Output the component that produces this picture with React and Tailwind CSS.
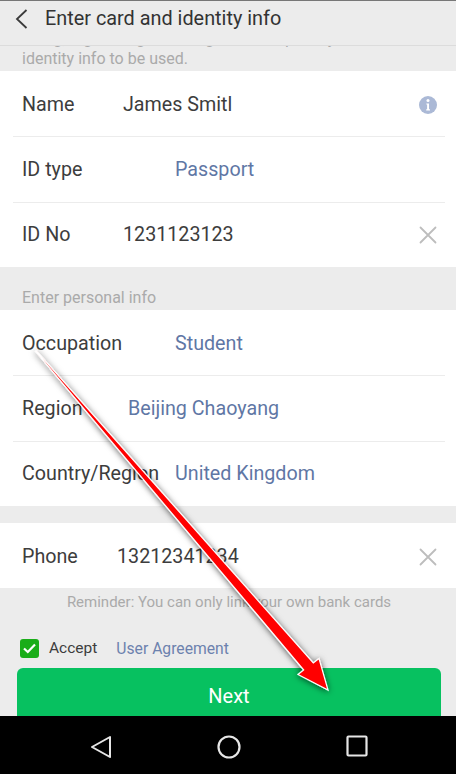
import React from "react";

const labelCls = "text-[19.7px] leading-[26px] text-[#3d3d3d] shrink-0 whitespace-nowrap";
const blueCls = "text-[19.7px] leading-[26px] text-[#5f77a5] whitespace-nowrap";
const darkCls = "text-[19.7px] leading-[26px] text-[#3d3d3d] whitespace-nowrap";

function Row({ label, labelW, value, blue, divider, right }) {
  return (
    <div className="relative h-[65.33px] flex items-center pl-[22px] pr-[18px] pt-[2px]">
      <div className={`${labelCls} ${labelW}`}>{label}</div>
      <div className={blue ? blueCls : darkCls}>{value}</div>
      <div className="ml-auto flex items-center">{right}</div>
      {divider && <div className="absolute left-[13px] right-[11px] bottom-[-1px] h-px bg-[#ececec]" />}
    </div>
  );
}

function ClearIcon() {
  return (
    <svg width="20" height="20" viewBox="0 0 20 20" fill="none" stroke="#bdbdbd" strokeWidth="1.8" strokeLinecap="round">
      <path d="M2.5 2.5 L17.5 17.5 M17.5 2.5 L2.5 17.5" />
    </svg>
  );
}

function InfoIcon() {
  return (
    <svg width="20" height="20" viewBox="0 0 20 20">
      <circle cx="10" cy="10" r="9" fill="#abb9d6" />
      <circle cx="10" cy="5.6" r="1.5" fill="#fff" />
      <path d="M8.3 8.4 H11 V14.2 H12 V15.4 H8.2 V14.2 H9.1 V9.6 H8.3 Z" fill="#fff" />
    </svg>
  );
}

export default function App() {
  return (
    <div className="relative w-[456px] h-[774px] overflow-hidden bg-[#ececec] flex flex-col font-['Roboto',sans-serif]">
      <div className="h-px bg-[#777777] shrink-0" />
      <header className="h-[45px] shrink-0 flex items-center pl-[15px] pb-[8px] border-b border-[#dcdcdc] bg-[#ececec]">
        <svg width="14" height="20" viewBox="0 0 14 20" fill="none" stroke="#3a3a3a" strokeWidth="1.8" className="mr-[16px]">
          <path d="M11.5 1 L2 10 L11.5 19" />
        </svg>
        <div className="text-[19.85px] leading-[26px] text-[#333333] whitespace-nowrap">Enter card and identity info</div>
      </header>

      <div className="h-[25px] shrink-0 overflow-hidden flex flex-col justify-end pl-[22px] pb-[2px]">
        <div className="text-[16px] leading-[20px] text-[#aaaaaa] whitespace-nowrap">Using, registering or linking a card requires your</div>
        <div className="text-[16px] leading-[20px] text-[#aaaaaa] whitespace-nowrap">identity info to be used.</div>
      </div>

      <section className="bg-white shrink-0">
        <Row label="Name" labelW="w-[101px]" value="James Smitl" divider right={<InfoIcon />} />
        <Row label="ID type" labelW="w-[153px]" value="Passport" blue divider />
        <Row label="ID No" labelW="w-[101px]" value="1231123123" right={<ClearIcon />} />
      </section>

      <div className="h-[43px] shrink-0 flex items-end pl-[22px] pb-[2px] text-[16px] leading-[20px] text-[#aaaaaa]">Enter personal info</div>

      <section className="bg-white shrink-0">
        <Row label="Occupation" labelW="w-[153px]" value="Student" blue divider />
        <Row label="Region" labelW="w-[106px]" value="Beijing Chaoyang" blue divider />
        <Row label="Country/Region" labelW="w-[153px]" value="United Kingdom" blue />
      </section>

      <div className="h-[17px] shrink-0" />

      <section className="bg-white shrink-0">
        <Row label="Phone" labelW="w-[95px]" value="13212341234" right={<ClearIcon />} />
      </section>

      <div className="h-[28px] shrink-0 flex items-center justify-center pl-[2px] text-[15px] text-[#aaaaaa]">Reminder: You can only link your own bank cards</div>

      <div className="mt-[20px] h-[24px] shrink-0 flex items-center pl-[20px]">
        <div className="w-[19px] h-[19px] rounded-[3px] bg-[#1aad19] flex items-center justify-center mr-[10px]">
          <svg width="13" height="11" viewBox="0 0 13 11" fill="none" stroke="#fff" strokeWidth="2.2">
            <path d="M1 5.5 L4.8 9 L12 1.5" />
          </svg>
        </div>
        <span className="text-[15.5px] text-[#3d3d3d] mr-[19px]">Accept</span>
        <span className="text-[15.7px] text-[#6c82ae]">User Agreement</span>
      </div>

      <div className="mt-[8px] ml-[17px] mr-[15px] h-[48px] shrink-0 rounded-t-[6px] bg-[#07c160] flex items-start justify-center pt-[15px] text-[20px] leading-[26px] text-white">Next</div>

      <nav className="h-[58px] shrink-0 bg-black flex items-center pt-[4px]">
        <div className="w-full grid grid-cols-[128px_128px_128px] pl-[37px]">
          <div className="flex justify-center">
            <svg width="24" height="26" viewBox="0 0 24 26" fill="none" stroke="#e6e6e6" strokeWidth="2" strokeLinejoin="round">
              <path d="M21 3 L3 13 L21 23 Z" />
            </svg>
          </div>
          <div className="flex justify-center">
            <svg width="26" height="26" viewBox="0 0 26 26" fill="none" stroke="#e6e6e6" strokeWidth="2.2">
              <circle cx="13" cy="13" r="10.5" />
            </svg>
          </div>
          <div className="flex justify-center">
            <svg width="24" height="24" viewBox="0 0 24 24" fill="none" stroke="#e6e6e6" strokeWidth="2.2" strokeLinejoin="round">
              <rect x="2.5" y="2.5" width="19" height="19" rx="1" />
            </svg>
          </div>
        </div>
      </nav>

      <svg className="absolute left-0 top-0 pointer-events-none" width="456" height="774" viewBox="0 0 456 774">
        <defs>
          <filter id="arrowShadow" x="-10%" y="-10%" width="120%" height="120%">
            <feDropShadow dx="0" dy="1" stdDeviation="3" floodColor="#000" floodOpacity="0.65" />
          </filter>
        </defs>
        <polygon
          points="36.4,350.8 313.3,662.9 319,658.5 328,690 298,674.5 303.7,670 35.6,351.4"
          fill="#ff0000"
          stroke="#ffffff"
          strokeWidth="1.2"
          strokeLinejoin="miter"
          filter="url(#arrowShadow)"
        />
      </svg>
    </div>
  );
}
